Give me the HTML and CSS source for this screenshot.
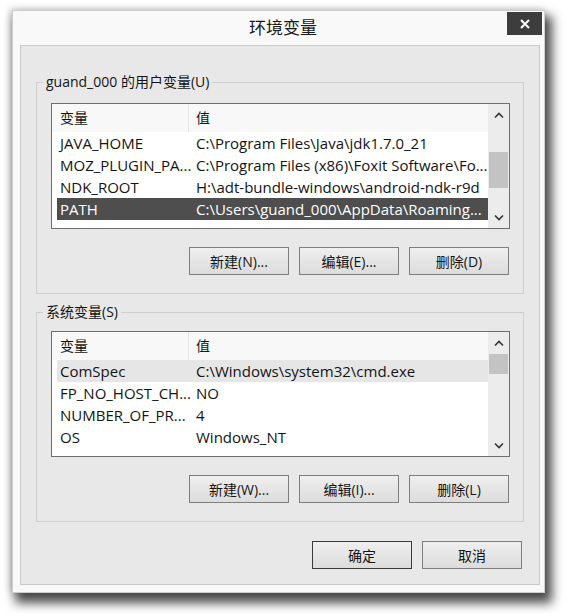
FILE: index.html
```html
<!DOCTYPE html>
<html lang="zh-CN">
<head>
    <meta charset="utf-8" />
    <title>环境变量</title>
    <link rel="stylesheet" href="styles.css">
</head>
<body>
<div class="window">
    <div class="titlebar">
        <span></span>
        <span class="title">环境变量</span>
        <button class="close" type="button">
            <svg width="12" height="12" viewBox="0 0 12 12">
                <path d="M2 2 L10 10 M10 2 L2 10" stroke="#fff" stroke-width="2" fill="none"/>
            </svg>
        </button>
    </div>
    <div class="client">
        <fieldset class="group">
            <legend>guand_000 的用户变量(U)</legend>
            <div class="list">
                <div class="list-body">
                    <div class="list-head">
                        <span class="col-name">变量</span>
                        <span class="col-value">值</span>
                    </div>
                    <div class="row">
                        <span class="col-name">JAVA_HOME</span>
                        <span class="col-value">C:\Program Files\Java\jdk1.7.0_21</span>
                    </div>
                    <div class="row">
                        <span class="col-name">MOZ_PLUGIN_PA...</span>
                        <span class="col-value">C:\Program Files (x86)\Foxit Software\Fo...</span>
                    </div>
                    <div class="row">
                        <span class="col-name">NDK_ROOT</span>
                        <span class="col-value">H:\adt-bundle-windows\android-ndk-r9d</span>
                    </div>
                    <div class="row row-selected">
                        <span class="col-name">PATH</span>
                        <span class="col-value">C:\Users\guand_000\AppData\Roaming...</span>
                    </div>
                </div>
                <div class="scrollbar">
                    <svg class="arrow" width="10" height="7" viewBox="0 0 10 7">
                        <path d="M1 5.5 L5 1.5 L9 5.5" stroke="#333" stroke-width="1.6" fill="none"/>
                    </svg>
                    <div class="track">
                        <div class="thumb thumb-user"></div>
                    </div>
                    <svg class="arrow" width="10" height="7" viewBox="0 0 10 7">
                        <path d="M1 1.5 L5 5.5 L9 1.5" stroke="#333" stroke-width="1.6" fill="none"/>
                    </svg>
                </div>
            </div>
            <div class="buttons">
                <button class="btn" type="button">新建(N)...</button>
                <button class="btn" type="button">编辑(E)...</button>
                <button class="btn" type="button">删除(D)</button>
            </div>
        </fieldset>

        <fieldset class="group group-system">
            <legend>系统变量(S)</legend>
            <div class="list">
                <div class="list-body">
                    <div class="list-head">
                        <span class="col-name">变量</span>
                        <span class="col-value">值</span>
                    </div>
                    <div class="row row-hover">
                        <span class="col-name">ComSpec</span>
                        <span class="col-value">C:\Windows\system32\cmd.exe</span>
                    </div>
                    <div class="row">
                        <span class="col-name">FP_NO_HOST_CH...</span>
                        <span class="col-value">NO</span>
                    </div>
                    <div class="row">
                        <span class="col-name">NUMBER_OF_PR...</span>
                        <span class="col-value">4</span>
                    </div>
                    <div class="row">
                        <span class="col-name">OS</span>
                        <span class="col-value">Windows_NT</span>
                    </div>
                </div>
                <div class="scrollbar">
                    <svg class="arrow" width="10" height="7" viewBox="0 0 10 7">
                        <path d="M1 5.5 L5 1.5 L9 5.5" stroke="#333" stroke-width="1.6" fill="none"/>
                    </svg>
                    <div class="track">
                        <div class="thumb thumb-system"></div>
                    </div>
                    <svg class="arrow" width="10" height="7" viewBox="0 0 10 7">
                        <path d="M1 1.5 L5 5.5 L9 1.5" stroke="#333" stroke-width="1.6" fill="none"/>
                    </svg>
                </div>
            </div>
            <div class="buttons">
                <button class="btn" type="button">新建(W)...</button>
                <button class="btn" type="button">编辑(I)...</button>
                <button class="btn" type="button">删除(L)</button>
            </div>
        </fieldset>

        <div class="buttons dialog-buttons">
            <button class="btn btn-default" type="button">确定</button>
            <button class="btn" type="button">取消</button>
        </div>
    </div>
</div>
</body>
</html>
```

FILE: styles.css
```css
* {
    box-sizing: border-box;
    margin: 0;
    padding: 0;
}
html, body {
    height: 100%;
}
body {
    background: #fff;
    font-family: "Open Sans", "Noto Sans CJK SC", sans-serif;
    color: #141414;
    padding: 10px 0 0 12px;
}
.window {
    width: 533px;
    height: 583px;
    background: #f9f9f9;
    border: 1px solid #cfcfcf;
    padding: 0 4px 7px 7px;
    display: flex;
    flex-direction: column;
    box-shadow: 5px 8px 10px 2px rgba(0, 0, 0, 0.7), -2px -1px 7px rgba(0, 0, 0, 0.2);
}
.titlebar {
    height: 34px;
    display: grid;
    grid-template-columns: 1fr auto 1fr;
    align-items: start;
}
.title {
    font-size: 17px;
    line-height: 34px;
    color: #1a1a1a;
    padding-left: 6px;
}
.close {
    justify-self: end;
    margin-top: 1px;
    margin-right: -2px;
    width: 35px;
    height: 23px;
    border: none;
    background: #3d3d3d;
    display: flex;
    align-items: center;
    justify-content: center;
}
.client {
    flex: 1;
    background: #e8e8e8;
    border: 1px solid #c9c9c9;
    padding: 26px 15px 0 15px;
}
.group {
    border: 1px solid #d0d0d0;
    padding: 11px 13px 18px 14px;
}
.group-system {
    margin-top: 8px;
    padding-top: 9px;
}
.group legend {
    font-size: 14px;
    line-height: 20px;
    padding: 0 3px;
    margin-left: -8px;
    color: #141414;
}
.list {
    display: flex;
    height: 126px;
    background: #fff;
    border: 1px solid #6e6e6e;
}
.list-body {
    flex: 1;
    overflow: hidden;
    font-size: 15px;
}
.list-head {
    display: flex;
    height: 28px;
    line-height: 28px;
    background: #f8f8f8;
    font-size: 14px;
    padding-left: 5px;
}
.row {
    display: flex;
    height: 22px;
    line-height: 22px;
    margin-left: 5px;
    white-space: nowrap;
}
.col-name {
    width: 131px;
    padding-left: 3px;
    flex-shrink: 0;
}
.col-value {
    flex: 1;
    padding-left: 8px;
    overflow: hidden;
}
.list-head .col-value {
    border-left: 1px solid #e3e3e3;
    padding-left: 7px;
}
.row-selected {
    background: #4e4e4e;
    color: #fff;
}
.row-hover {
    background: #e6e6e6;
}
.scrollbar {
    width: 21px;
    background: #ececec;
    display: flex;
    flex-direction: column;
    align-items: center;
    padding: 8px 0 7px;
}
.arrow {
    flex-shrink: 0;
}
.track {
    flex: 1;
    width: 100%;
    padding: 0 1px;
}
.thumb {
    background: #c3c3c3;
}
.thumb-user {
    margin-top: 33px;
    height: 36px;
}
.thumb-system {
    margin-top: 7px;
    height: 20px;
}
.buttons {
    display: flex;
    justify-content: flex-end;
    gap: 10px;
    margin-top: 18px;
    padding-right: 1px;
}
.btn {
    width: 100px;
    height: 28px;
    font-family: "Open Sans", "Noto Sans CJK SC", sans-serif;
    font-size: 14px;
    color: #141414;
    background: linear-gradient(#efefef, #dcdcdc);
    border: 1px solid #7e7e7e;
}
.btn-default {
    border-color: #3a3a3a;
}
.dialog-buttons {
    margin-top: 19px;
    padding-right: 2px;
}
```
